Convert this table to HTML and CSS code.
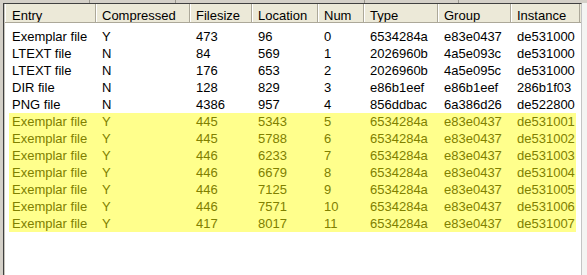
FILE: index.html
```html
<!DOCTYPE html>
<html>
<head>
<meta charset="utf-8">
<link rel="stylesheet" href="styles.css">
</head>
<body>
<div class="topbar">
  <div class="seg s1"></div>
  <div class="seg s2"></div>
  <div class="seg s3"></div>
  <div class="seg s4"></div>
  <div class="seg s5"></div>
</div>
<div class="window">
  <div class="list">
    <div class="header">
      <div class="hcell">Entry</div>
      <div class="hcell">Compressed</div>
      <div class="hcell">Filesize</div>
      <div class="hcell">Location</div>
      <div class="hcell">Num</div>
      <div class="hcell">Type</div>
      <div class="hcell">Group</div>
      <div class="hcell">Instance</div>
    </div>
    <div class="rows">
      <div class="row"><span>Exemplar file</span><span>Y</span><span>473</span><span>96</span><span>0</span><span>6534284a</span><span>e83e0437</span><span>de531000</span></div>
      <div class="row"><span>LTEXT file</span><span>N</span><span>84</span><span>569</span><span>1</span><span>2026960b</span><span>4a5e093c</span><span>de531000</span></div>
      <div class="row"><span>LTEXT file</span><span>N</span><span>176</span><span>653</span><span>2</span><span>2026960b</span><span>4a5e095c</span><span>de531000</span></div>
      <div class="row"><span>DIR file</span><span>N</span><span>128</span><span>829</span><span>3</span><span>e86b1eef</span><span>e86b1eef</span><span>286b1f03</span></div>
      <div class="row"><span>PNG file</span><span>N</span><span>4386</span><span>957</span><span>4</span><span>856ddbac</span><span>6a386d26</span><span>de522800</span></div>
      <div class="row hl"><span>Exemplar file</span><span>Y</span><span>445</span><span>5343</span><span>5</span><span>6534284a</span><span>e83e0437</span><span>de531001</span></div>
      <div class="row hl"><span>Exemplar file</span><span>Y</span><span>445</span><span>5788</span><span>6</span><span>6534284a</span><span>e83e0437</span><span>de531002</span></div>
      <div class="row hl"><span>Exemplar file</span><span>Y</span><span>446</span><span>6233</span><span>7</span><span>6534284a</span><span>e83e0437</span><span>de531003</span></div>
      <div class="row hl"><span>Exemplar file</span><span>Y</span><span>446</span><span>6679</span><span>8</span><span>6534284a</span><span>e83e0437</span><span>de531004</span></div>
      <div class="row hl"><span>Exemplar file</span><span>Y</span><span>446</span><span>7125</span><span>9</span><span>6534284a</span><span>e83e0437</span><span>de531005</span></div>
      <div class="row hl"><span>Exemplar file</span><span>Y</span><span>446</span><span>7571</span><span>10</span><span>6534284a</span><span>e83e0437</span><span>de531006</span></div>
      <div class="row hl"><span>Exemplar file</span><span>Y</span><span>417</span><span>8017</span><span>11</span><span>6534284a</span><span>e83e0437</span><span>de531007</span></div>
    </div>
  </div>
  <div class="edge"></div>
</div>
</body>
</html>
```
FILE: styles.css
```css
html, body {
  margin: 0;
  padding: 0;
}
body {
  width: 587px;
  height: 275px;
  overflow: hidden;
  background: #d4d0c8;
  font-family: "Liberation Sans", Arial, sans-serif;
  font-size: 13px;
  color: #000;
}
.topbar {
  display: flex;
  height: 3px;
}
.seg {
  height: 3px;
  border-right: 1px solid #9a978e;
}
.s1 { width: 89px; }
.s2 { width: 85px; }
.s3 { width: 188px; }
.s4 { width: 93px; }
.s5 { flex: 1; border-right: none; }

.window {
  display: flex;
  height: 272px;
}
.list {
  width: 576px;
  margin-left: 3px;
  padding-left: 1px;
  border-left: 1px solid #404040;
  border-top: 1px solid #404040;
  border-right: 1px solid #c4c4c4;
  background: #fff;
  box-shadow: inset 1px 0 0 #c8c5bc;
}
.edge {
  flex: 1;
  background: #f4f4f2;
}
.header {
  display: grid;
  grid-template-columns: 91px 94px 62px 66px 46px 74px 73px 69px;
  height: 19px;
  box-sizing: border-box;
  background: #ece9d8;
  border-bottom: 1px solid #aca899;
}
.hcell {
  padding: 3px 0 0 6px;
  line-height: 17px;
  white-space: nowrap;
  overflow: hidden;
  box-shadow: inset -1px 0 0 #aca899, inset 1px 0 0 #fff;
}
.hcell:first-child {
  padding-left: 7px;
}
.rows {
  padding-top: 5px;
}
.row {
  display: grid;
  grid-template-columns: 87px 94px 62px 66px 46px 74px 73px 65px;
  margin-left: 4px;
  width: 567px;
  height: 17px;
  line-height: 17px;
}
.row span {
  padding-left: 6px;
  white-space: nowrap;
  overflow: hidden;
}
.row span:first-child {
  padding-left: 3px;
}
.row.hl {
  background: #ffff8c;
  color: #808000;
}
```
